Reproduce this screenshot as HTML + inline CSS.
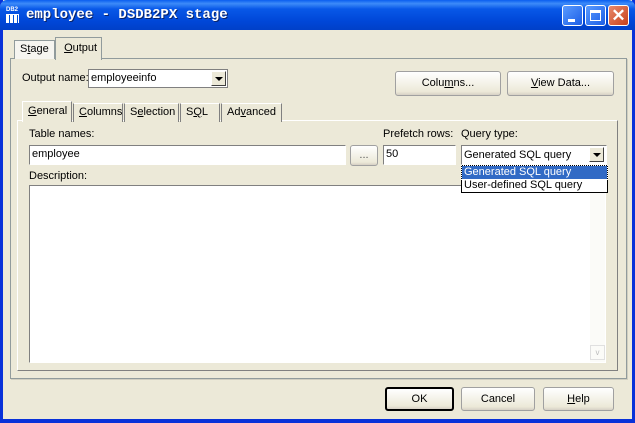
<!DOCTYPE html>
<html><head><style>
*{box-sizing:border-box;margin:0;padding:0}
body{width:635px;height:423px;overflow:hidden;background:#0831d9;font-family:"Liberation Sans",sans-serif;font-size:11px;color:#000;position:relative}
.a{position:absolute}
#win{left:3px;top:0;width:629px;height:419px;background:#ece9d8}
#title{left:0;top:0;width:635px;height:30px;background:linear-gradient(#0a5ef0 0%,#3d8bf8 12%,#0858e8 30%,#0047d8 70%,#0040c8 100%);border-radius:7px 7px 0 0}
.tb{width:21px;height:21px;border:1px solid #fff;border-radius:3px;background:linear-gradient(135deg,#5a9bff,#1c5ee6)}
.btn{background:#f4f3ee;border:1px solid #003c74;border-radius:3px;text-align:center;line-height:22px;background:linear-gradient(#fff,#ece9d8 85%,#d6d0c5)}
.inp{background:#fff;border:1px solid #7f9db9;padding-left:2px;line-height:17px}
.tab{border:1px solid #919b9c;border-bottom:none;background:#f6f5f0;padding:2px 0 0 5px;height:19px}
.lb{font-size:11px}
u{text-decoration:underline}
.arr{width:15px;height:15px;background:#ece9d8;border:1px solid #fff;border-right-color:#404040;border-bottom-color:#404040}
.arr:after{content:"";position:absolute;left:3px;top:5px;border:4px solid transparent;border-top:4px solid #000;border-bottom:none}
</style></head><body>
<div id="win" class="a"></div>
<div id="title" class="a">
 <div class="a" style="left:6px;top:7px;width:13px;height:15px;color:#fff;font-size:6px;line-height:6px;font-weight:bold">DB2<div style="margin-top:1px;width:13px;height:9px;background:repeating-linear-gradient(90deg,#fff 0 3px,#0050d8 3px 4px),#fff;border-top:1px solid #fff"></div></div>
 <div class="a" style="left:26px;top:7px;color:#fff;font-family:'Liberation Mono',monospace;font-weight:bold;font-size:14px;text-shadow:1px 1px #0a246a">employee - DSDB2PX stage</div>
 <div class="a tb" style="left:562px;top:5px"><div class="a" style="left:5px;top:13px;width:7px;height:3px;background:#fff"></div></div>
 <div class="a tb" style="left:585px;top:5px"><div class="a" style="left:4px;top:4px;width:11px;height:11px;border:1px solid #fff;border-top-width:3px"></div></div>
 <div class="a tb" style="left:608px;top:5px;background:linear-gradient(135deg,#e88a6c,#c8401a);color:#fff;font-size:17px;font-weight:bold;line-height:19px;text-align:center">✕</div>
</div>
<!-- outer tab panel -->
<div class="a" style="left:10px;top:58px;width:617px;height:321px;border:1px solid #919b9c;background:#f6f5f0;box-shadow:1px 1px 0 #d0cec0"></div>
<div class="a" style="left:11px;top:59px;width:615px;height:319px;background:#ece9d8"></div>
<div class="a tab" style="left:14px;top:40px;width:41px">S<u>t</u>age</div>
<div class="a tab" style="left:55px;top:37px;width:47px;height:23px;background:#ece9d8;padding-top:4px">&nbsp;<u>O</u>utput</div>
<div class="a lb" style="left:22px;top:72px">Output name:</div>
<div class="a inp" style="left:88px;top:69px;width:140px;height:19px;border-color:#808080">employeeinfo</div>
<div class="a arr" style="left:211px;top:71px"></div>
<div class="a btn" style="left:395px;top:71px;width:106px;height:25px;border-color:#a0a0a0">Colu<u>m</u>ns...</div>
<div class="a btn" style="left:507px;top:71px;width:107px;height:25px;border-color:#a0a0a0"><u>V</u>iew Data...</div>
<!-- inner panel -->
<div class="a" style="left:17px;top:120px;width:601px;height:251px;border:1px solid #fff;border-right-color:#808080;border-bottom-color:#808080"></div>
<div class="a tab" style="left:22px;top:101px;width:50px;height:21px;background:#ece9d8;border-color:#fff #808080 #fff #fff;padding-top:3px"><u>G</u>eneral</div>
<div class="a tab" style="left:73px;top:103px;width:50px;background:#ece9d8;border-color:#fff #808080"><u>C</u>olumns</div>
<div class="a tab" style="left:124px;top:103px;width:55px;background:#ece9d8;border-color:#fff #808080">S<u>e</u>lection</div>
<div class="a tab" style="left:180px;top:103px;width:40px;background:#ece9d8;border-color:#fff #808080">S<u>Q</u>L</div>
<div class="a tab" style="left:221px;top:103px;width:61px;background:#ece9d8;border-color:#fff #808080">Ad<u>v</u>anced</div>
<div class="a lb" style="left:29px;top:128px">Table names:</div>
<div class="a inp" style="left:29px;top:145px;width:317px;height:20px;border-color:#808080 #fff #fff #808080">employee</div>
<div class="a btn" style="left:350px;top:145px;width:28px;height:21px;line-height:18px;border-color:#a0a0a0;color:#555">...</div>
<div class="a lb" style="left:383px;top:128px">Prefetch rows:</div>
<div class="a inp" style="left:383px;top:145px;width:73px;height:20px;border-color:#808080 #fff #fff #808080">50</div>
<div class="a lb" style="left:461px;top:128px">Query type:</div>
<div class="a inp" style="left:461px;top:145px;width:146px;height:20px;border-color:#808080 #fff #fff #808080;line-height:18px">Generated SQL query</div>
<div class="a arr" style="left:589px;top:147px"></div>
<div class="a lb" style="left:29px;top:170px">Description:</div>
<div class="a" style="left:29px;top:185px;width:577px;height:178px;background:#fff;border:1px solid #808080;border-right-color:#fff;border-bottom-color:#fff"></div>
<div class="a" style="left:590px;top:186px;width:15px;height:176px;background:#fbfbf8"></div>
<div class="a" style="left:590px;top:345px;width:15px;height:15px;border:1px solid #e0e0e0;color:#bbb;font-size:8px;text-align:center;line-height:13px">v</div>
<div class="a" style="left:461px;top:165px;width:147px;height:28px;background:#fff;border:1px solid #000"></div>
<div class="a" style="left:462px;top:166px;width:145px;height:13px;background:#316ac5;color:#fff;padding-left:2px;line-height:13px;outline:1px dotted #fff">Generated SQL query</div>
<div class="a" style="left:464px;top:179px;line-height:13px">User-defined SQL query</div>
<div class="a btn" style="left:385px;top:387px;width:69px;height:24px;border:2px solid #000;line-height:20px">OK</div>
<div class="a btn" style="left:461px;top:387px;width:74px;height:24px;border-color:#a0a0a0">Cancel</div>
<div class="a btn" style="left:543px;top:387px;width:71px;height:24px;border-color:#a0a0a0"><u>H</u>elp</div>
</body></html>
